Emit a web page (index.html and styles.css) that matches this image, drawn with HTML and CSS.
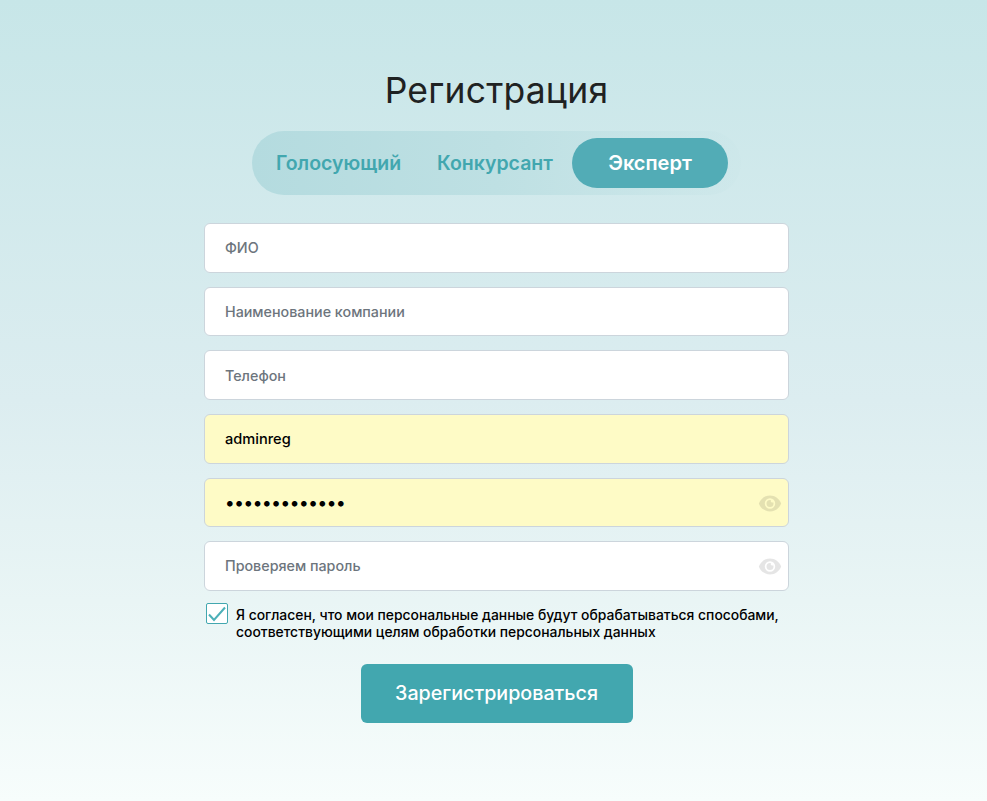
FILE: index.html
```html
<!DOCTYPE html>
<html lang="ru">
<head>
<meta charset="utf-8">
<title>Регистрация</title>
<link rel="stylesheet" href="styles.css">
</head>
<body>
<main class="page">
  <h1 class="title">Регистрация</h1>
  <div class="tabs">
    <button class="tab" type="button">Голосующий</button>
    <button class="tab" type="button">Конкурсант</button>
    <button class="tab tab-active" type="button">Эксперт</button>
  </div>
  <form class="form">
    <input class="field" type="text" placeholder="ФИО">
    <input class="field" type="text" placeholder="Наименование компании">
    <input class="field" type="text" placeholder="Телефон">
    <input class="field field-filled" type="text" value="adminreg">
    <div class="password">
      <input class="field field-filled field-secret" type="password" value="adminreg12345">
      <svg class="eye" viewBox="0 0 24 17"><path class="eye-shape" fill-rule="evenodd" d="M12 .5C6.800.5 2.600 3.800.8 8.500c1.800 4.700 6 8 11.200 8s9.400-3.300 11.200-8C21.400 3.800 17.200.5 12 .5Zm0 2.800a5.200 5.200 0 1 1 0 10.400 5.200 5.200 0 0 1 0-10.400Zm0 1.700a3.500 3.500 0 1 0 3.500 3.500c0-.5-.1-.9-.3-1.300a1.600 1.600 0 0 1-2.200-2.200A3.400 3.400 0 0 0 12 5Z"/></svg>
    </div>
    <div class="password">
      <input class="field" type="password" placeholder="Проверяем пароль">
      <svg class="eye" viewBox="0 0 24 17"><path class="eye-shape" fill-rule="evenodd" d="M12 .5C6.800.5 2.600 3.800.8 8.500c1.800 4.700 6 8 11.200 8s9.400-3.300 11.200-8C21.400 3.800 17.200.5 12 .5Zm0 2.800a5.200 5.200 0 1 1 0 10.400 5.200 5.200 0 0 1 0-10.400Zm0 1.700a3.500 3.500 0 1 0 3.500 3.500c0-.5-.1-.9-.3-1.300a1.600 1.600 0 0 1-2.200-2.200A3.400 3.400 0 0 0 12 5Z"/></svg>
    </div>
    <label class="agree">
      <span class="check">
        <svg viewBox="0 0 20 19"><path d="M2 10.500 7 16 18 3.500"/></svg>
      </span>
      <span class="agree-text">Я согласен, что мои персональные данные будут обрабатываться способами, соответствующими целям обработки персональных данных</span>
    </label>
    <button class="submit" type="button">Зарегистрироваться</button>
  </form>
</main>
</body>
</html>
```
FILE: styles.css
```css
* { box-sizing: border-box; }
html, body { margin: 0; height: 100%; }
body {
  padding-left: 6px;
  background: linear-gradient(180deg, #c7e6e8 0%, #dcedf0 50%, #e9f5f5 75%, #f7fdfc 100%);
  font-family: "Inter", "Noto Sans", sans-serif;
  overflow: hidden;
}
.page {
  width: 585px;
  margin: 0 auto;
  padding-top: 69px;
  display: flex;
  flex-direction: column;
  align-items: center;
}
.title {
  margin: 0;
  font-family: "Inter", sans-serif;
  font-weight: 400;
  font-size: 35.500px;
  line-height: 44px;
  color: #1f2222;
  letter-spacing: .2px;
}
.tabs {
  margin-top: 18px;
  width: 489px;
  height: 64px;
  padding: 7px 0 7px 7px;
  display: flex;
  align-items: center;
  border-radius: 32px;
  background: linear-gradient(90deg, #b4dbdf 0%, #bee0e3 50%, rgba(200, 228, 231, .2) 100%);
}
.tab {
  height: 50px;
  border: 0;
  background: none;
  padding: 0;
  font-family: "Inter", sans-serif;
  font-size: 19.500px;
  font-weight: 600;
  color: #42a7af;
  border-radius: 25px;
}
.tab:nth-child(1) { width: 143px; margin-left: 8px; margin-right: 23px; }
.tab:nth-child(2) { width: 124px; margin-right: 15px; }
.tab-active { width: 156px; background: #52acb6; color: #fff; font-size: 20px; }
.form {
  width: 585px;
  margin-top: 28.200px;
  display: flex;
  flex-direction: column;
  gap: 14px;
}
.field {
  display: block;
  width: 100%;
  height: 49.600px;
  padding: 0 20px;
  background: #fff;
  border: 1px solid #ccd5dc;
  border-radius: 6px;
  outline: 0;
  font-family: "Inter", sans-serif;
  font-size: 14.300px;
  font-weight: 500;
  color: #000;
}
.field::placeholder { color: #6d757d; opacity: 1; }
.field-filled { background: #fefbc6; font-size: 14.600px; }
.field-secret { font-size: 18px; letter-spacing: -.35px; }
.password { position: relative; }
.eye {
  position: absolute;
  right: 7px;
  top: 17px;
  width: 24px;
  height: 17px;
}
.eye-shape { fill: #000; opacity: .1; }
.agree {
  margin-top: -2px;
  display: flex;
  gap: 8px;
  padding-left: 2px;
  padding-right: 6px;
}
.check {
  flex: none;
  width: 22px;
  height: 21px;
  background: #fff;
  border: 1px solid #42a7af;
  border-radius: 2px;
}
.check svg { display: block; width: 100%; height: 100%; }
.check path { fill: none; stroke: #4cb0b8; stroke-width: 2; }
.agree-text {
  padding-top: 4px;
  font-size: 13.900px;
  line-height: 17px;
  font-weight: 500;
  color: #000;
}
.submit {
  align-self: center;
  width: 272px;
  height: 59px;
  margin-top: 9px;
  border: 0;
  border-radius: 6px;
  background: #42a7af;
  color: #fff;
  font-family: "Inter", sans-serif;
  font-size: 19.700px;
  font-weight: 500;
}
```
